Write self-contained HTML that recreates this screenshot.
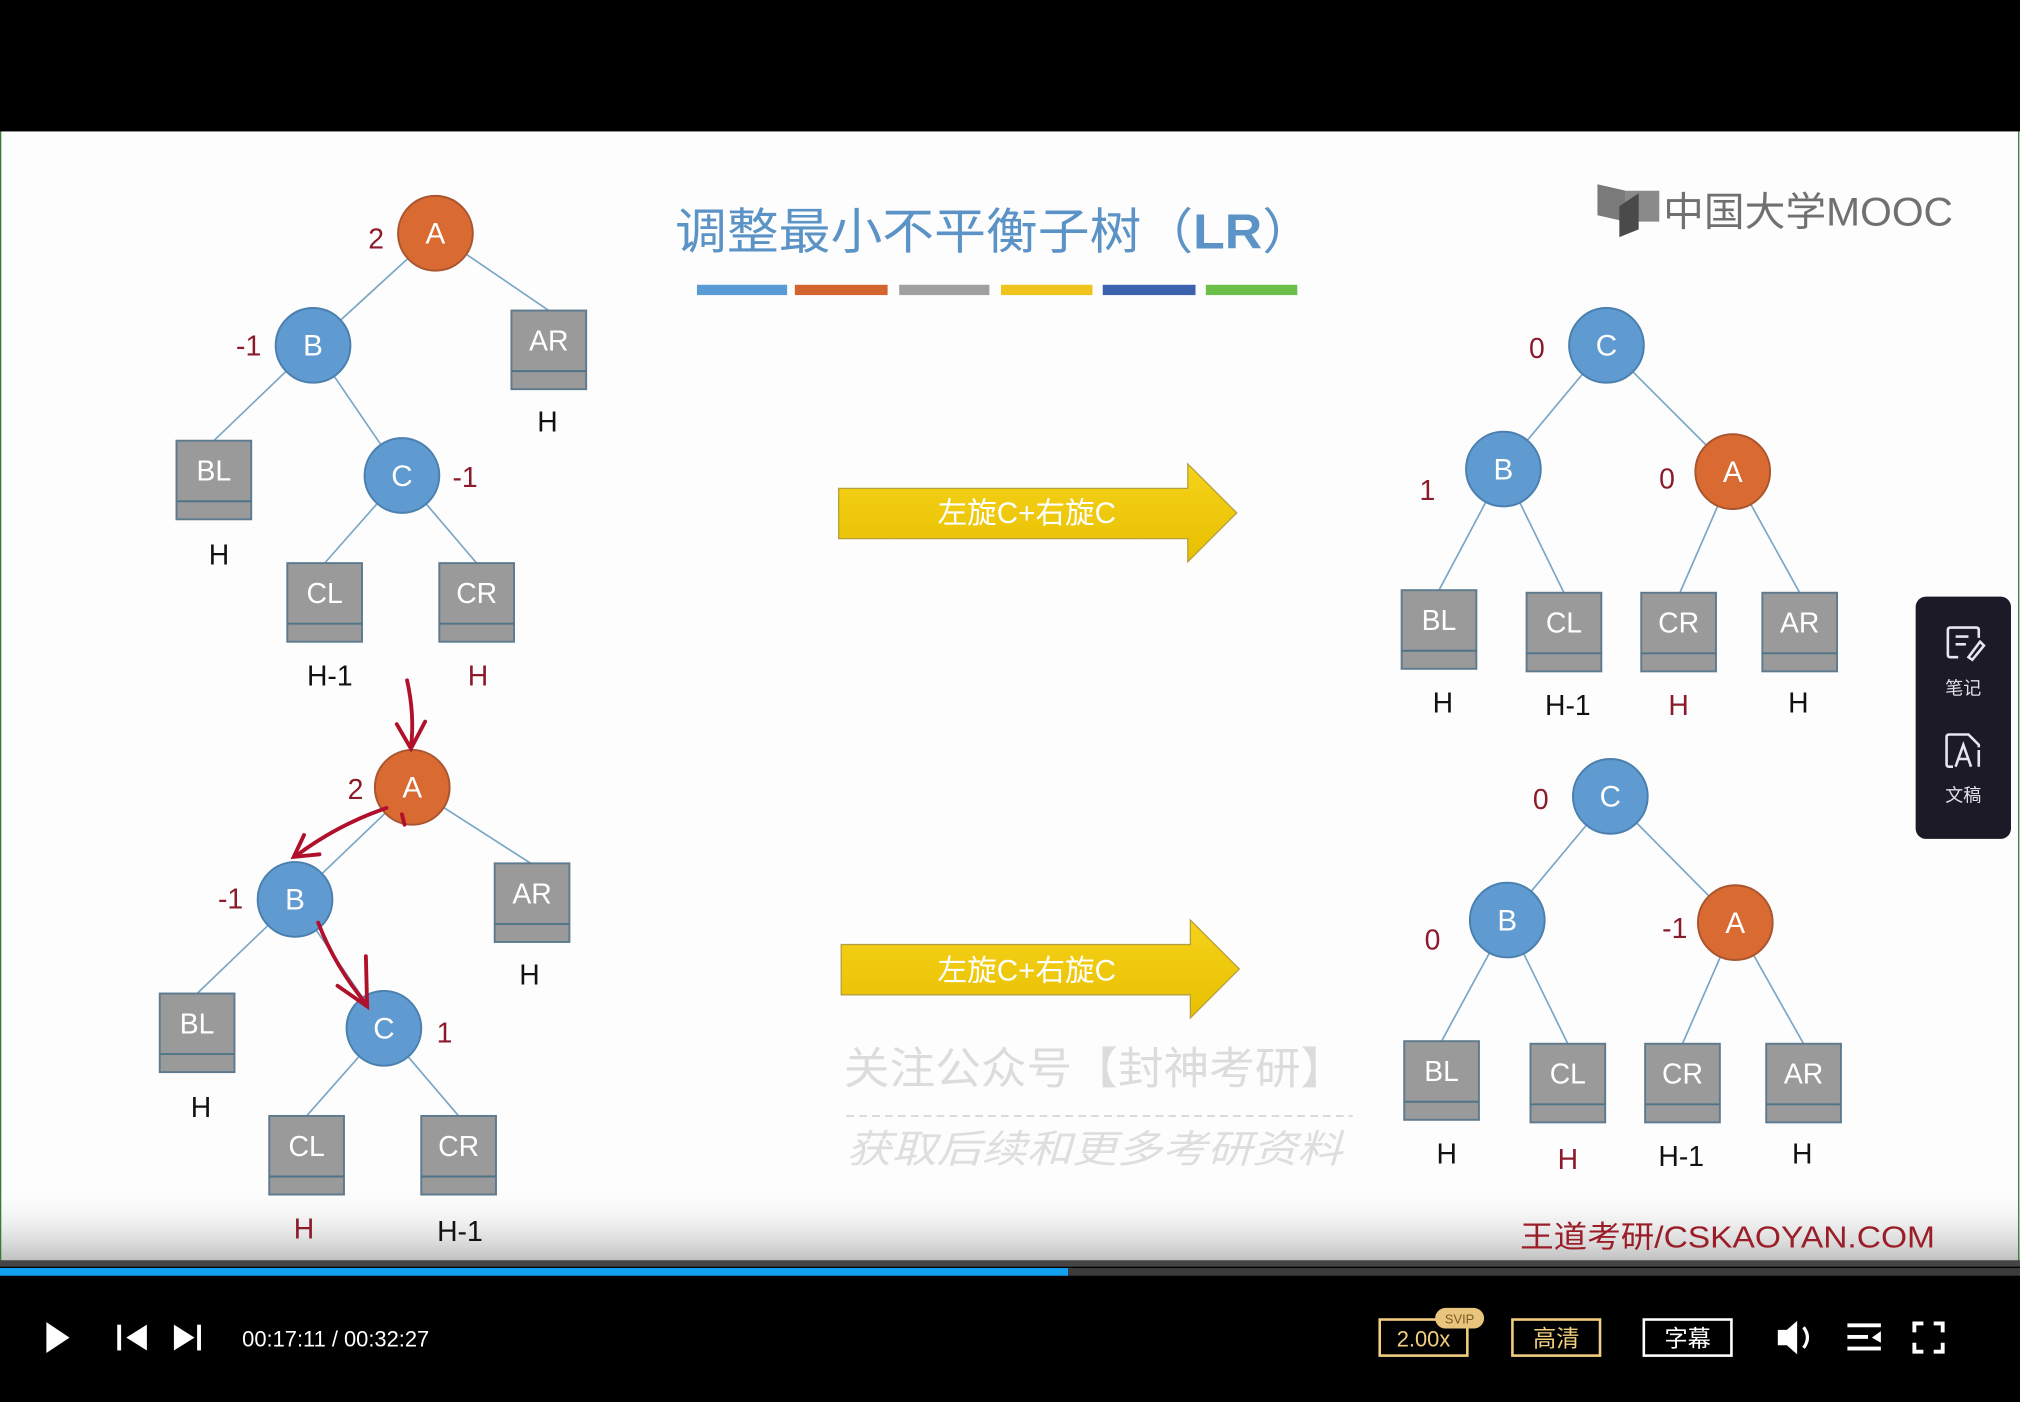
<!DOCTYPE html>
<html><head><meta charset="utf-8"><style>
html,body{margin:0;padding:0;background:#000;width:2020px;height:1402px;overflow:hidden}
svg{display:block}
text{font-family:"Liberation Sans","Noto Sans CJK SC",sans-serif}
</style></head><body>
<svg width="2020" height="1402" viewBox="0 0 1568 1088" preserveAspectRatio="none" xmlns="http://www.w3.org/2000/svg">
<defs>
<linearGradient id="fade" x1="0" y1="0" x2="0" y2="1"><stop offset="0" stop-color="#fff" stop-opacity="0"/><stop offset="1" stop-color="#b8b8b8"/></linearGradient>
<linearGradient id="yel" x1="0" y1="0" x2="0" y2="1"><stop offset="0" stop-color="#f5d21a"/><stop offset="1" stop-color="#e8c000"/></linearGradient>
<g id="box"><rect x="0" y="0" width="58" height="61" fill="#9a9a9a" stroke="#5e7a8e" stroke-width="1.5"/><line x1="0" y1="47" x2="58" y2="47" stroke="#4f7488" stroke-width="1.5"/></g>
</defs>
<rect x="0" y="0" width="1568" height="1088" fill="#000"/>
<rect x="0" y="102" width="1568" height="880" fill="#fdfdfd"/>
<rect x="0" y="920" width="1568" height="62" fill="url(#fade)"/>
<line x1="0.5" y1="102" x2="0.5" y2="982" stroke="#3a7a3a" stroke-width="1"/>
<line x1="1567" y1="102" x2="1567" y2="982" stroke="#3a7a3a" stroke-width="1"/>
<rect x="0" y="978" width="1568" height="5" fill="#444"/>
<rect x="0" y="984" width="1568" height="6" fill="#3c3c3c"/>
<rect x="0" y="984" width="829" height="6" fill="#12a0f0"/>

<text x="524" y="193" font-size="38" fill="#5b93c6" textLength="496" lengthAdjust="spacingAndGlyphs">调整最小不平衡子树（<tspan font-weight="bold">LR</tspan>）</text>
<rect x="541" y="221" width="70" height="8" fill="#5b9bd5"/>
<rect x="617" y="221" width="72" height="8" fill="#d2642e"/>
<rect x="698" y="221" width="70" height="8" fill="#a0a0a0"/>
<rect x="777" y="221" width="71" height="8" fill="#efc41d"/>
<rect x="856" y="221" width="72" height="8" fill="#3c62ad"/>
<rect x="936" y="221" width="71" height="8" fill="#6cbf4a"/>

<polygon points="1240,143 1262,148 1262,172 1240,167" fill="#7a7a7a"/>
<polygon points="1262,148 1288,148 1288,172 1262,172" fill="#8a8a8a"/>
<polygon points="1257,160 1272,150 1272,178 1257,184" fill="#4a4a4a"/>
<text x="1291" y="175" font-size="31" fill="#707070" textLength="225" lengthAdjust="spacingAndGlyphs">中国大学MOOC</text>

<g stroke="#7aa6c6" stroke-width="1.3">
<line x1="338" y1="181" x2="243" y2="268"/><line x1="338" y1="181" x2="426" y2="241"/>
<line x1="243" y1="268" x2="166" y2="342"/><line x1="243" y1="268" x2="312" y2="369"/>
<line x1="312" y1="369" x2="252" y2="437"/><line x1="312" y1="369" x2="370" y2="437"/>
<line x1="320" y1="611" x2="229" y2="698"/><line x1="320" y1="611" x2="412" y2="670"/>
<line x1="229" y1="698" x2="153" y2="771"/><line x1="229" y1="698" x2="298" y2="798"/>
<line x1="298" y1="798" x2="238" y2="866"/><line x1="298" y1="798" x2="356" y2="866"/>
<line x1="1247" y1="268" x2="1167" y2="364"/><line x1="1247" y1="268" x2="1345" y2="366"/>
<line x1="1167" y1="364" x2="1117" y2="458"/><line x1="1167" y1="364" x2="1214" y2="460"/>
<line x1="1345" y1="366" x2="1304" y2="460"/><line x1="1345" y1="366" x2="1397" y2="460"/>
<line x1="1250" y1="618" x2="1170" y2="714"/><line x1="1250" y1="618" x2="1347" y2="716"/>
<line x1="1170" y1="714" x2="1119" y2="808"/><line x1="1170" y1="714" x2="1217" y2="810"/>
<line x1="1347" y1="716" x2="1306" y2="810"/><line x1="1347" y1="716" x2="1400" y2="810"/>
</g>

<g stroke-width="1.5" font-size="23" fill="#fff" text-anchor="middle">
<circle cx="338" cy="181" r="29" fill="#d86a32" stroke="#a85530"/><text x="338" y="189" stroke="none">A</text>
<circle cx="243" cy="268" r="29" fill="#5f9ad0" stroke="#4a7fae"/><text x="243" y="276" stroke="none">B</text>
<circle cx="312" cy="369" r="29" fill="#5f9ad0" stroke="#4a7fae"/><text x="312" y="377" stroke="none">C</text>
<circle cx="320" cy="611" r="29" fill="#d86a32" stroke="#a85530"/><text x="320" y="619" stroke="none">A</text>
<circle cx="229" cy="698" r="29" fill="#5f9ad0" stroke="#4a7fae"/><text x="229" y="706" stroke="none">B</text>
<circle cx="298" cy="798" r="29" fill="#5f9ad0" stroke="#4a7fae"/><text x="298" y="806" stroke="none">C</text>
<circle cx="1247" cy="268" r="29" fill="#5f9ad0" stroke="#4a7fae"/><text x="1247" y="276" stroke="none">C</text>
<circle cx="1167" cy="364" r="29" fill="#5f9ad0" stroke="#4a7fae"/><text x="1167" y="372" stroke="none">B</text>
<circle cx="1345" cy="366" r="29" fill="#d86a32" stroke="#a85530"/><text x="1345" y="374" stroke="none">A</text>
<circle cx="1250" cy="618" r="29" fill="#5f9ad0" stroke="#4a7fae"/><text x="1250" y="626" stroke="none">C</text>
<circle cx="1170" cy="714" r="29" fill="#5f9ad0" stroke="#4a7fae"/><text x="1170" y="722" stroke="none">B</text>
<circle cx="1347" cy="716" r="29" fill="#d86a32" stroke="#a85530"/><text x="1347" y="724" stroke="none">A</text>
</g>

<g font-size="22" fill="#fff" text-anchor="middle">
<use href="#box" x="397" y="241"/><text x="426" y="272">AR</text>
<use href="#box" x="137" y="342"/><text x="166" y="373">BL</text>
<use href="#box" x="223" y="437"/><text x="252" y="468">CL</text>
<use href="#box" x="341" y="437"/><text x="370" y="468">CR</text>
<use href="#box" x="384" y="670"/><text x="413" y="701">AR</text>
<use href="#box" x="124" y="771"/><text x="153" y="802">BL</text>
<use href="#box" x="209" y="866"/><text x="238" y="897">CL</text>
<use href="#box" x="327" y="866"/><text x="356" y="897">CR</text>
<use href="#box" x="1088" y="458"/><text x="1117" y="489">BL</text>
<use href="#box" x="1185" y="460"/><text x="1214" y="491">CL</text>
<use href="#box" x="1274" y="460"/><text x="1303" y="491">CR</text>
<use href="#box" x="1368" y="460"/><text x="1397" y="491">AR</text>
<use href="#box" x="1090" y="808"/><text x="1119" y="839">BL</text>
<use href="#box" x="1188" y="810"/><text x="1217" y="841">CL</text>
<use href="#box" x="1277" y="810"/><text x="1306" y="841">CR</text>
<use href="#box" x="1371" y="810"/><text x="1400" y="841">AR</text>
</g>

<g font-size="22" text-anchor="middle" fill="#111">
<text x="425" y="335">H</text><text x="170" y="438">H</text><text x="256" y="532">H-1</text><text x="371" y="532" fill="#8b1a2a">H</text>
<text x="411" y="764">H</text><text x="156" y="867">H</text><text x="236" y="961" fill="#8b1a2a">H</text><text x="357" y="963">H-1</text>
<text x="1120" y="553">H</text><text x="1217" y="555">H-1</text><text x="1303" y="555" fill="#8b1a2a">H</text><text x="1396" y="553">H</text>
<text x="1123" y="903">H</text><text x="1217" y="907" fill="#8b1a2a">H</text><text x="1305" y="905">H-1</text><text x="1399" y="903">H</text>
</g>
<g font-size="22" text-anchor="middle" fill="#8b1a2a">
<text x="292" y="193">2</text><text x="193" y="276">-1</text><text x="361" y="378">-1</text>
<text x="276" y="620">2</text><text x="179" y="705">-1</text><text x="345" y="809">1</text>
<text x="1193" y="278">0</text><text x="1108" y="388">1</text><text x="1294" y="379">0</text>
<text x="1196" y="628">0</text><text x="1112" y="737">0</text><text x="1300" y="728">-1</text>
</g>

<g stroke="#b0102a" stroke-width="3" fill="none" stroke-linecap="round">
<path d="M316,528 Q322,555 319,580"/><path d="M308,562 L319,581 L330,560"/>
<path d="M300,627 Q262,640 230,664"/><path d="M236,648 L228,665 L248,663"/>
<path d="M247,716 Q260,750 285,780"/><path d="M262,765 L285,781 L284,742"/>
<path d="M312,632 L314,640"/>
</g>

<polygon points="651,379 922,379 922,360 960,398 922,436 922,418 651,418" fill="url(#yel)" stroke="#b5a040" stroke-width="1"/>
<text x="797" y="406" font-size="23" fill="#fff" text-anchor="middle">左旋C+右旋C</text>
<polygon points="653,733 924,733 924,714 962,752 924,790 924,772 653,772" fill="url(#yel)" stroke="#b5a040" stroke-width="1"/>
<text x="797" y="761" font-size="23" fill="#fff" text-anchor="middle">左旋C+右旋C</text>

<text x="655" y="841" font-size="34" fill="#dcdcdc" textLength="390" lengthAdjust="spacingAndGlyphs">关注公众号【封神考研】</text>
<line x1="657" y1="866" x2="1050" y2="866" stroke="#d8d8d8" stroke-width="1.5" stroke-dasharray="6,4"/>
<text x="657" y="902" font-size="30" fill="#dedede" font-style="italic" textLength="385" lengthAdjust="spacingAndGlyphs">获取后续和更多考研资料</text>

<text x="1180" y="968" font-size="24" fill="#9a1e28" textLength="322" lengthAdjust="spacingAndGlyphs">王道考研/CSKAOYAN.COM</text>

<rect x="1487" y="463" width="74" height="188" rx="8" fill="#1b1a26"/>
<g stroke="#e6e6f0" stroke-width="2" fill="none">
<path d="M1520,510 L1514,510 Q1512,510 1512,508 L1512,489 Q1512,487 1514,487 L1534,487 Q1536,487 1536,489 L1536,495"/>
<line x1="1518" y1="494" x2="1528" y2="494"/><line x1="1518" y1="500" x2="1526" y2="500"/>
<path d="M1528,510 L1537,498 L1540,501 L1531,512 Z"/>
<path d="M1516,595 L1513,595 Q1511,595 1511,593 L1511,572 Q1511,570 1513,570 L1528,570 L1536,578 L1536,580"/>
<path d="M1518,595 L1524,578 L1530,595 M1520,589 L1528,589 M1536,582 L1536,595"/>
</g>
<text x="1524" y="539" font-size="14" fill="#e0e0e8" text-anchor="middle">笔记</text>
<text x="1524" y="622" font-size="14" fill="#e0e0e8" text-anchor="middle">文稿</text>

<polygon points="36,1026 54,1038 36,1050" fill="#fff"/>
<rect x="91" y="1028" width="3" height="20" fill="#fff"/><polygon points="114,1028 98,1038 114,1048" fill="#fff"/>
<polygon points="135,1028 151,1038 135,1048" fill="#fff"/><rect x="153" y="1028" width="3" height="20" fill="#fff"/>
<text x="188" y="1045" font-size="17" fill="#fff">00:17:11 / 00:32:27</text>

<rect x="1071" y="1024" width="68" height="28" fill="none" stroke="#f2cf7e" stroke-width="2"/>
<text x="1105" y="1045" font-size="17" fill="#f2cf7e" text-anchor="middle">2.00x</text>
<rect x="1114" y="1015" width="38" height="16" rx="8" fill="#e8c47c"/>
<text x="1133" y="1027" font-size="10" fill="#7a5a20" text-anchor="middle">SVIP</text>
<rect x="1174" y="1024" width="68" height="28" fill="none" stroke="#f2cf7e" stroke-width="2"/>
<text x="1208" y="1045" font-size="18" fill="#f2cf7e" text-anchor="middle">高清</text>
<rect x="1276" y="1024" width="68" height="28" fill="none" stroke="#fff" stroke-width="2"/>
<text x="1310" y="1045" font-size="18" fill="#fff" text-anchor="middle">字幕</text>
<polygon points="1380,1032 1387,1032 1395,1025 1395,1051 1387,1044 1380,1044" fill="#fff"/>
<path d="M1400,1030 Q1406,1038 1400,1046" stroke="#fff" stroke-width="2.5" fill="none"/>
<g fill="#fff"><rect x="1434" y="1027" width="26" height="3"/><rect x="1434" y="1036" width="16" height="3"/><rect x="1434" y="1045" width="26" height="3"/><polygon points="1460,1033 1453,1038 1460,1042"/></g>
<g stroke="#fff" stroke-width="3" fill="none"><path d="M1486,1034 V1027 H1493 M1501,1027 H1508 V1034 M1508,1042 V1049 H1501 M1493,1049 H1486 V1042"/></g>
</svg>
</body></html>
